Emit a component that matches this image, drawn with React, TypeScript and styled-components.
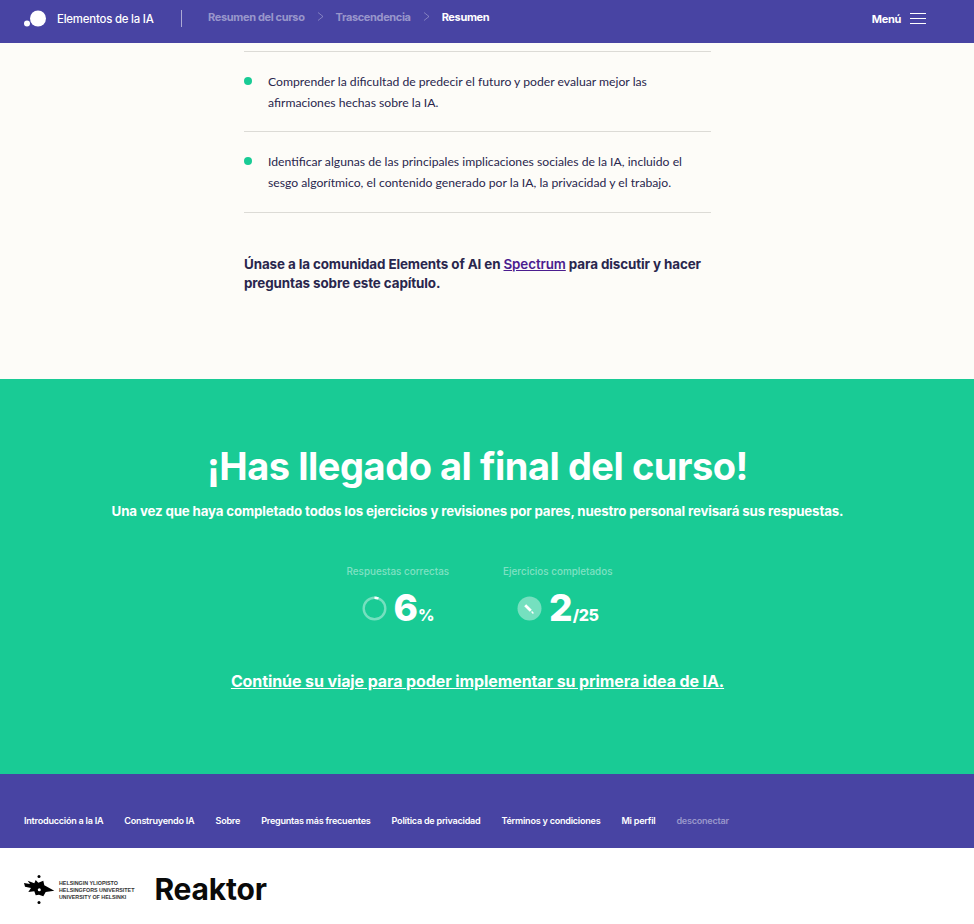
import React from 'react';
import styled, { createGlobalStyle } from 'styled-components';

const GlobalStyle = createGlobalStyle`
  html, body {
    margin: 0;
    padding: 0;
    background: #ffffff;
    font-family: 'Lato', 'Liberation Sans', sans-serif;
  }
  * {
    box-sizing: border-box;
  }
`;

const Page = styled.div`
  width: 974px;
  height: 924px;
  overflow: hidden;
  display: flex;
  flex-direction: column;
`;

const Header = styled.header`
  height: 43px;
  background: #4844a3;
  display: flex;
  align-items: center;
  padding: 0 48px 6px 24px;
  color: #ffffff;
`;

const Brand = styled.div`
  display: flex;
  align-items: center;
  gap: 11px;
  width: 158px;
  height: 17px;
  border-right: 1px solid rgba(255, 255, 255, 0.55);
  font-family: 'Inter', sans-serif;
  font-size: 11.4px;
  font-weight: 500;
  letter-spacing: -0.2px;
`;

const Crumbs = styled.nav`
  display: flex;
  align-items: center;
  margin-left: 26px;
  gap: 12px;
  flex: 1;
  margin-top: -4px;
`;

const Crumb = styled.span<{ $active?: boolean }>`
  font-family: 'Inter', sans-serif;
  font-size: 11px;
  font-weight: 700;
  letter-spacing: -0.35px;
  color: ${({ $active }) => ($active ? '#ffffff' : 'rgba(255, 255, 255, 0.45)')};
`;

const MenuButton = styled.div`
  display: flex;
  align-items: center;
  gap: 9px;
  font-family: 'Inter', sans-serif;
  font-size: 11px;
  font-weight: 700;
  letter-spacing: -0.3px;
`;

const Burger = styled.div`
  width: 16px;
  height: 11px;
  border-top: 1px solid #ffffff;
  border-bottom: 1px solid #ffffff;
  position: relative;
  &::after {
    content: '';
    position: absolute;
    left: 0;
    right: 0;
    top: 4px;
    height: 1px;
    background: #ffffff;
  }
`;

const Content = styled.main`
  height: 336px;
  background: #fdfcf8;
  padding: 8px 263px 0 244px;
`;

const Outcomes = styled.ul`
  list-style: none;
  margin: 0;
  padding: 0;
  border-top: 1px solid #dcdbd6;
`;

const Outcome = styled.li<{ $height: number }>`
  position: relative;
  height: ${({ $height }) => $height}px;
  padding: 19px 0 0 24px;
  border-bottom: 1px solid #dcdbd6;
  font-family: 'Lato', sans-serif;
  font-size: 12.2px;
  line-height: 21px;
  color: #29264d;
  &::before {
    content: '';
    position: absolute;
    left: 0;
    top: 25px;
    width: 8px;
    height: 8px;
    border-radius: 50%;
    background: #19cb95;
  }
`;

const Community = styled.p`
  margin: 42px 0 0;
  font-family: 'Inter', sans-serif;
  font-size: 13.4px;
  line-height: 19px;
  font-weight: 700;
  letter-spacing: -0.1px;
  color: #29264d;
  a {
    color: #4b1d8f;
    font-weight: 600;
  }
`;

const Finish = styled.section`
  height: 395px;
  background: #19cb95;
  color: #ffffff;
  display: flex;
  flex-direction: column;
  align-items: center;
  padding: 63px 19px 0 0;
`;

const Title = styled.h2`
  margin: 0;
  font-family: 'Inter', sans-serif;
  font-size: 38px;
  line-height: 48px;
  font-weight: 700;
  letter-spacing: -0.47px;
`;

const Lead = styled.p`
  margin: 11px 0 0;
  font-family: 'Inter', sans-serif;
  font-size: 13.3px;
  line-height: 20px;
  font-weight: 700;
  letter-spacing: -0.15px;
`;

const Stats = styled.div`
  display: flex;
  gap: 54px;
  margin: 43px 0 0 4px;
`;

const Stat = styled.div`
  display: flex;
  flex-direction: column;
  align-items: center;
`;

const StatLabel = styled.div`
  font-family: 'Inter', sans-serif;
  font-size: 9.9px;
  line-height: 14px;
  font-weight: 500;
  color: rgba(255, 255, 255, 0.45);
`;

const StatValue = styled.div`
  display: flex;
  align-items: baseline;
  margin-top: 7px;
  height: 46px;
`;

const StatIcon = styled.svg`
  width: 25px;
  height: 25px;
  align-self: center;
  margin-right: 7px;
`;

const Big = styled.span`
  font-family: 'Inter', sans-serif;
  font-size: 37px;
  line-height: 46px;
  font-weight: 800;
`;

const Unit = styled.span`
  font-family: 'Inter', sans-serif;
  font-size: 16px;
  font-weight: 800;
  letter-spacing: -0.4px;
`;

const Continue = styled.a`
  margin-top: 39px;
  font-family: 'Inter', sans-serif;
  font-size: 16px;
  line-height: 22px;
  font-weight: 700;
  letter-spacing: -0.1px;
  color: #ffffff;
  text-decoration: underline;
`;

const FooterNav = styled.nav`
  height: 74px;
  background: #4844a3;
  display: flex;
  align-items: center;
  gap: 21px;
  padding: 18px 24px 0;
`;

const FooterLink = styled.a<{ $muted?: boolean }>`
  font-family: 'Inter', sans-serif;
  font-size: 9.05px;
  font-weight: 600;
  letter-spacing: -0.23px;
  color: ${({ $muted }) => ($muted ? 'rgba(255, 255, 255, 0.45)' : '#ffffff')};
`;

const Partners = styled.footer`
  flex: 1;
  background: #ffffff;
  display: flex;
  align-items: flex-start;
  padding: 27px 24px 0;
  gap: 20px;
`;

const Helsinki = styled.div`
  display: flex;
  align-items: center;
  gap: 3px;
`;

const HelsinkiText = styled.div`
  font-family: 'Liberation Sans', sans-serif;
  font-size: 5.35px;
  line-height: 7px;
  font-weight: 700;
  color: #333333;
  white-space: nowrap;
`;

const Reaktor = styled.div`
  font-family: 'Inter', sans-serif;
  font-size: 30px;
  line-height: 28px;
  font-weight: 700;
  letter-spacing: -0.2px;
  color: #0a0a0a;
`;

const crumbSeparator = (
  <svg width="7" height="9" viewBox="0 0 7 9" fill="none" stroke="rgba(255,255,255,0.4)" strokeWidth="0.8">
    <path d="M1 .5 6 4.5 1 8.5" />
  </svg>
);

const footerLinks = [
  'Introducción a la IA',
  'Construyendo IA',
  'Sobre',
  'Preguntas más frecuentes',
  'Política de privacidad',
  'Términos y condiciones',
  'Mi perfil',
];

const App: React.FC = () => {
  return (
    <Page>
      <GlobalStyle />
      <Header>
        <Brand>
          <svg width="22" height="17" viewBox="0 0 22 17" fill="#fff">
            <circle cx="3" cy="13.5" r="3" />
            <circle cx="14" cy="8.5" r="8" />
          </svg>
          Elementos de la IA
        </Brand>
        <Crumbs>
          <Crumb>Resumen del curso</Crumb>
          {crumbSeparator}
          <Crumb>Trascendencia</Crumb>
          {crumbSeparator}
          <Crumb $active>Resumen</Crumb>
        </Crumbs>
        <MenuButton>
          Menú
          <Burger />
        </MenuButton>
      </Header>
      <Content>
        <Outcomes>
          <Outcome $height={80}>
            Comprender la dificultad de predecir el futuro y poder evaluar mejor las afirmaciones hechas sobre la IA.
          </Outcome>
          <Outcome $height={81}>
            Identificar algunas de las principales implicaciones sociales de la IA, incluido el sesgo algorítmico, el
            contenido generado por la IA, la privacidad y el trabajo.
          </Outcome>
        </Outcomes>
        <Community>
          Únase a la comunidad Elements of AI en <a href="#spectrum">Spectrum</a> para discutir y hacer preguntas sobre
          este capítulo.
        </Community>
      </Content>
      <Finish>
        <Title>¡Has llegado al final del curso!</Title>
        <Lead>
          Una vez que haya completado todos los ejercicios y revisiones por pares, nuestro personal revisará sus
          respuestas.
        </Lead>
        <Stats>
          <Stat>
            <StatLabel>Respuestas correctas</StatLabel>
            <StatValue>
              <StatIcon viewBox="0 0 25 25" fill="none" strokeWidth="2.4">
                <circle cx="12.5" cy="12.5" r="10.8" stroke="rgba(255,255,255,0.4)" />
                <path d="M12.5 1.7a10.8 10.8 0 0 1 4 .8" stroke="#fff" />
              </StatIcon>
              <Big>6</Big>
              <Unit>%</Unit>
            </StatValue>
          </Stat>
          <Stat>
            <StatLabel>Ejercicios completados</StatLabel>
            <StatValue>
              <StatIcon viewBox="0 0 25 25">
                <circle cx="12.5" cy="12.5" r="12" fill="rgba(255,255,255,0.4)" />
                <path d="M8.2 9.2 13.8 14.8" stroke="#fff" strokeWidth="2.8" />
                <path d="M14.6 15.6 16.4 17.4" stroke="#fff" strokeWidth="1.4" />
              </StatIcon>
              <Big>2</Big>
              <Unit>/25</Unit>
            </StatValue>
          </Stat>
        </Stats>
        <Continue href="#continue">Continúe su viaje para poder implementar su primera idea de IA.</Continue>
      </Finish>
      <FooterNav>
        {footerLinks.map((link) => (
          <FooterLink key={link}>{link}</FooterLink>
        ))}
        <FooterLink $muted>desconectar</FooterLink>
      </FooterNav>
      <Partners>
        <Helsinki>
          <svg width="32" height="30" viewBox="0 0 32 30" fill="#000">
            <circle cx="15" cy="1.5" r="1.5" />
            <circle cx="15" cy="27.5" r="1.5" />
            <path d="M0 8 6 9 3.7 5.7 10.3 8.3 11.7 5 14.3 7.7 19.3 5.7 20.3 10.3 30.3 15.7 21.7 17 19.3 21.3 15 19.7 11.7 20.3 10.3 16.3 4.3 17 7 13 1 11.7z" />
            <circle cx="15.3" cy="14.7" r="1.5" fill="#fff" />
          </svg>
          <HelsinkiText>
            HELSINGIN YLIOPISTO
            <br />
            HELSINGFORS UNIVERSITET
            <br />
            UNIVERSITY OF HELSINKI
          </HelsinkiText>
        </Helsinki>
        <Reaktor>Reaktor</Reaktor>
      </Partners>
    </Page>
  );
};

export default App;
